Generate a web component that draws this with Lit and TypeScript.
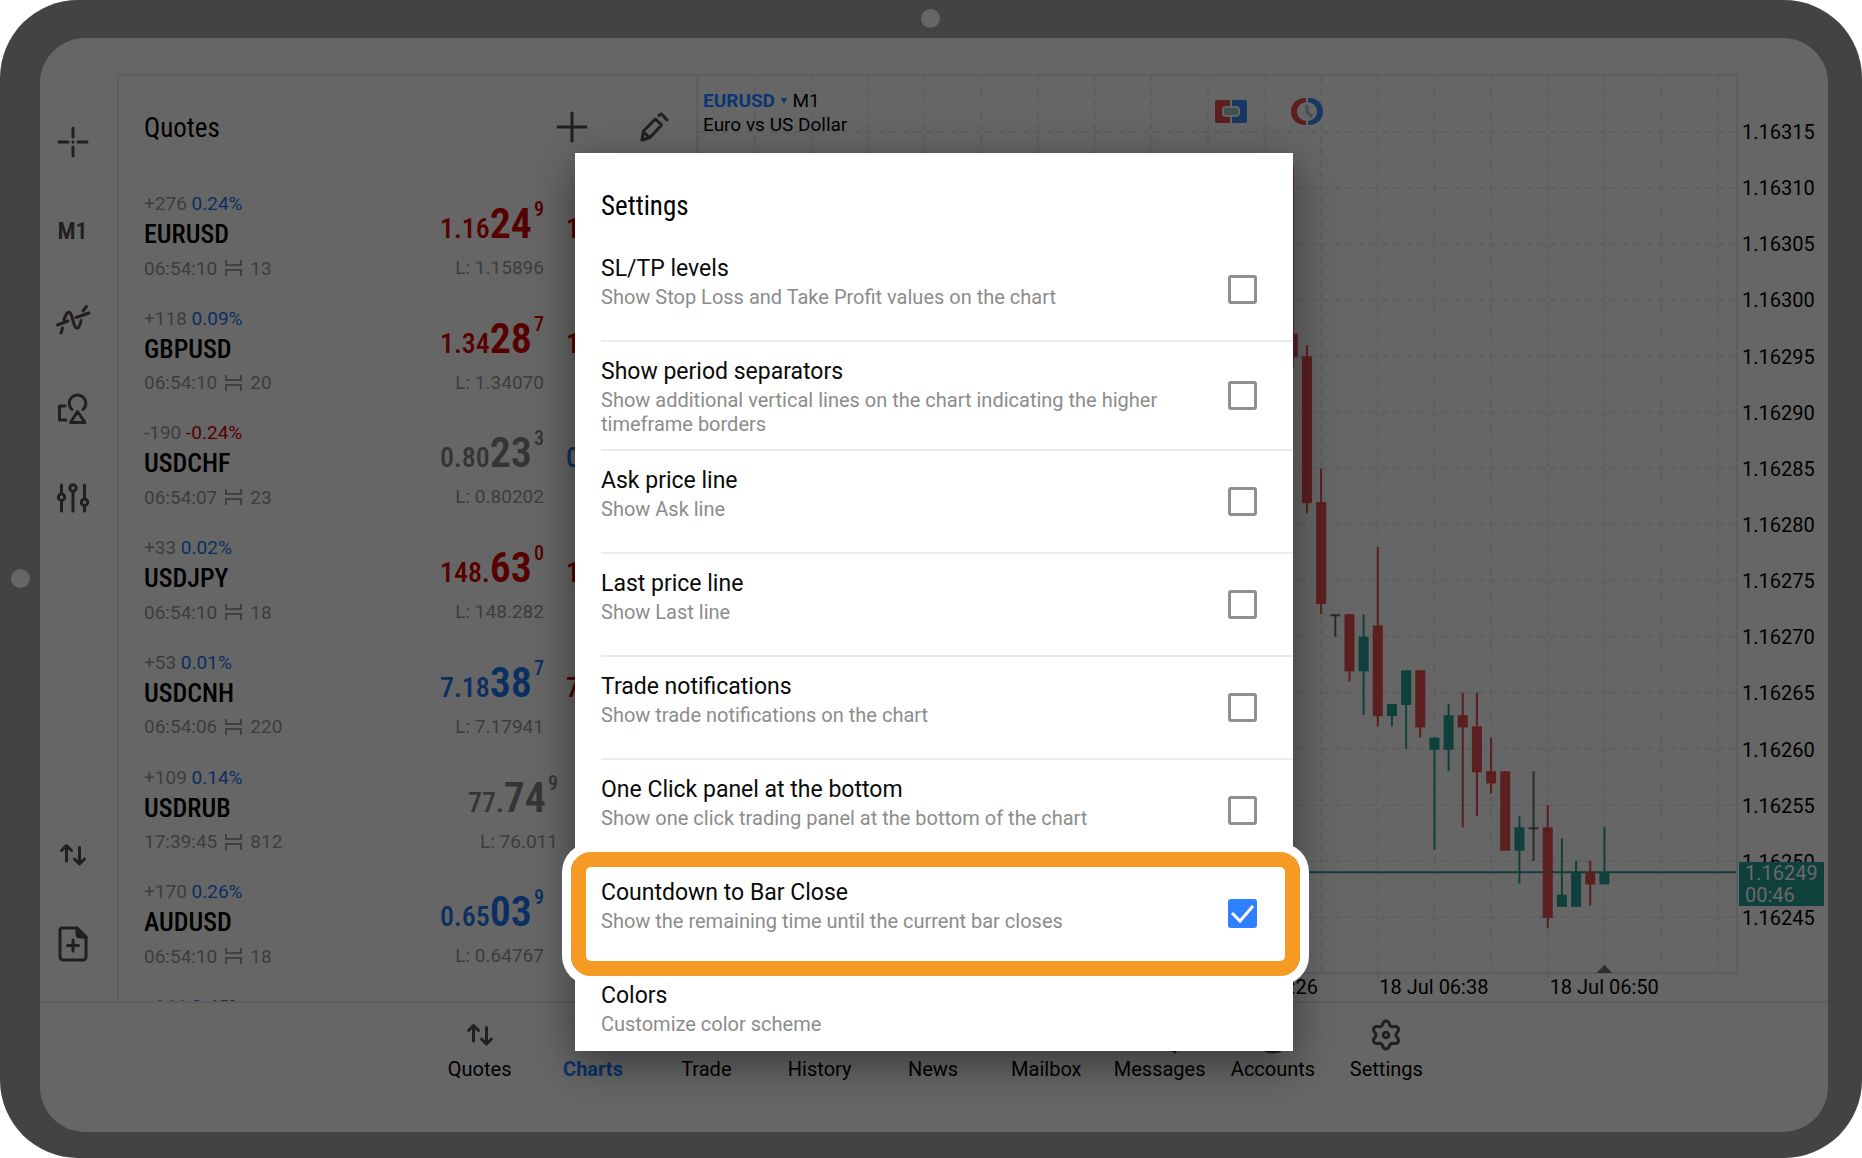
import { LitElement, html, css, svg, nothing } from "lit";
import { customElement, property, state } from "lit/decorators.js";
import { classMap } from "lit/directives/class-map.js";

type Tone = "red" | "blue" | "gray";

interface Price {
  lead: string;
  big: string;
  tip: string;
  tone: Tone;
}

interface Quote {
  change: string;
  percent: string;
  down?: boolean;
  symbol: string;
  time: string;
  spread: string;
  bid: Price;
  low: string;
  ask: Price;
  high: string;
}

const price = (lead: string, big: string, tip: string, tone: Tone): Price => ({ lead, big, tip, tone });

const QUOTES: Quote[] = [
  { change: "+276", percent: "0.24%", symbol: "EURUSD", time: "06:54:10", spread: "13", bid: price("1.16", "24", "9", "red"), low: "1.15896", ask: price("1.16", "26", "2", "red"), high: "1.16311" },
  { change: "+118", percent: "0.09%", symbol: "GBPUSD", time: "06:54:10", spread: "20", bid: price("1.34", "28", "7", "red"), low: "1.34070", ask: price("1.34", "30", "7", "red"), high: "1.34388" },
  { change: "-190", percent: "-0.24%", down: true, symbol: "USDCHF", time: "06:54:07", spread: "23", bid: price("0.80", "23", "3", "gray"), low: "0.80202", ask: price("0.80", "25", "6", "blue"), high: "0.80457" },
  { change: "+33", percent: "0.02%", symbol: "USDJPY", time: "06:54:10", spread: "18", bid: price("148.", "63", "0", "red"), low: "148.282", ask: price("148.", "64", "8", "red"), high: "148.751" },
  { change: "+53", percent: "0.01%", symbol: "USDCNH", time: "06:54:06", spread: "220", bid: price("7.18", "38", "7", "blue"), low: "7.17941", ask: price("7.18", "60", "7", "red"), high: "7.18622" },
  { change: "+109", percent: "0.14%", symbol: "USDRUB", time: "17:39:45", spread: "812", bid: price("77.", "74", "9", "gray"), low: "76.011", ask: price("78.", "56", "1", "gray"), high: "78.640" },
  { change: "+170", percent: "0.26%", symbol: "AUDUSD", time: "06:54:10", spread: "18", bid: price("0.65", "03", "9", "blue"), low: "0.64767", ask: price("0.65", "05", "7", "blue"), high: "0.65084" },
  { change: "+266", percent: "0.45%", symbol: "NZDUSD", time: "06:54:10", spread: "21", bid: price("0.59", "58", "4", "blue"), low: "0.59271", ask: price("0.59", "60", "5", "blue"), high: "0.59630" },
];

/* Candles, oldest first: open, high, low, close in points above 1.16000. */
const CANDLES: [number, number, number, number][] = [
  [297, 312, 294, 295],
  [295, 296, 281, 282],
  [282, 285, 272, 273],
  [272, 272, 270, 272],
  [272, 272, 266, 267],
  [267, 272, 263, 270],
  [271, 278, 262, 263],
  [263, 264, 262, 264],
  [264, 267, 260, 267],
  [267, 267, 261, 262],
  [260, 261, 251, 261],
  [260, 264, 258, 263],
  [263, 265, 253, 262],
  [262, 265, 254, 258],
  [258, 261, 256, 257],
  [258, 258, 251, 251],
  [251, 254, 248, 253],
  [253, 258, 250, 253],
  [253, 255, 244, 245],
  [246, 252, 246, 247],
  [246, 250, 246, 249],
  [249, 250, 246, 248],
  [248, 253, 248, 249],
];

const PRICES = Array.from({ length: 15 }, (_, i) => 315 - i * 5);
const TIMES = ["05:50", "06:02", "06:14", "06:26", "06:38", "06:50"];
const PLOT = { w: 1038, h: 896, step: 14.164, last: 906.4, top: 56, unit: 11.215 };
const yOf = (p: number) => PLOT.top + (315 - p) * PLOT.unit;

interface Setting {
  id: string;
  title: string;
  text: string;
  on?: boolean;
  plain?: boolean;
}

const SETTINGS: Setting[] = [
  { id: "levels", title: "SL/TP levels", text: "Show Stop Loss and Take Profit values on the chart" },
  { id: "periods", title: "Show period separators", text: "Show additional vertical lines on the chart indicating the higher timeframe borders" },
  { id: "ask", title: "Ask price line", text: "Show Ask line" },
  { id: "last", title: "Last price line", text: "Show Last line" },
  { id: "trade", title: "Trade notifications", text: "Show trade notifications on the chart" },
  { id: "oneclick", title: "One Click panel at the bottom", text: "Show one click trading panel at the bottom of the chart" },
  { id: "countdown", title: "Countdown to Bar Close", text: "Show the remaining time until the current bar closes", on: true },
  { id: "colors", title: "Colors", text: "Customize color scheme", plain: true },
];

const gear = () => {
  const pts: string[] = [];
  for (let i = 0; i < 72; i++) {
    const a = (i / 72) * Math.PI * 2;
    const c = Math.cos(6 * a);
    const r = 12 + 2 * Math.sign(c) * Math.pow(Math.abs(c), 0.7);
    pts.push(`${(16 + r * Math.sin(a)).toFixed(2)} ${(16 - r * Math.cos(a)).toFixed(2)}`);
  }
  return `M${pts.join("L")}Z`;
};

const ICONS: Record<string, { w: number; h: number; body: unknown }> = {
  cross: { w: 32, h: 32, body: svg`<path d="M16 2v9M16 21v9M2 16h9M21 16h9"/><path d="M16 16v0"/>` },
  wave: { w: 34, h: 30, body: svg`<path d="M5 28l1.500-5M8 15C9.500 9 13 3.500 15.500 10.500L18 19c2 6.500 5.500 5 7-3.500M27 6l3.500-4.500M1.500 20L12 16M20 12.500L33 8"/>` },
  shapes: { w: 30, h: 31, body: svg`<path d="M14 16.500a8.300 8.300 0 1 1 11 0M7 13H1.500v14H8M19.500 18.500L12.500 29.500h14.500z"/>` },
  sliders: { w: 32, h: 30, body: svg`<path d="M4.500 2v8.500M4.500 18v10M16 9v19M27.500 2v13.500M27.500 23v5"/><circle cx="4.500" cy="14.300" r="3.200"/><circle cx="16" cy="5" r="3.200"/><circle cx="27.500" cy="19.200" r="3.200"/>` },
  swap: { w: 26, h: 24, body: svg`<path d="M6.500 18V2.500M1.500 7.500l5-5 5 5M19.500 4.500V21M14.500 16l5 5 5-5"/>` },
  file: { w: 30, h: 36, body: svg`<path d="M4 2h15l9 9v20a3 3 0 0 1-3 3H5a3 3 0 0 1-3-3V4a2 2 0 0 1 2-2zM15 14v11M9.500 19.500h11"/><path class="solid" d="M19 2v6q0 3 3 3h6z"/>` },
  plus: { w: 32, h: 32, body: svg`<path d="M16 2v28M2 16h28"/>` },
  pencil: { w: 30, h: 30, body: svg`<path d="M2 28l1.500-9L15.500 7l6 6L10 25.500zM19 3.500l1-1q1-1 2 0l5 5.500M3.500 20l6 5.500"/>` },
  chart: { w: 30, h: 30, body: svg`<path d="M7 3v24M15 6v20M23 2v24M4 9h6v11H4zM20 7h6v12h-6z"/>` },
  trade: { w: 30, h: 30, body: svg`<path d="M2 24l9-10 6 6L28 6"/>` },
  history: { w: 30, h: 30, body: svg`<circle cx="15" cy="15" r="12"/><path d="M15 8v8l5 3"/>` },
  news: { w: 30, h: 26, body: svg`<path d="M3 3h24v20H3zM8 9h14M8 16h14"/>` },
  mail: { w: 30, h: 26, body: svg`<path d="M3 3h24v20H3zM3 5l12 9L27 5"/>` },
  chat: { w: 34, h: 36, body: svg`<path d="M4 3h26v24H4zM26 27l6 8-10-8"/>` },
  person: { w: 36, h: 36, body: svg`<circle cx="18" cy="18" r="17"/><circle cx="18" cy="13" r="5"/><path class="solid" d="M7 28q11-9 22 0-11 13-22 0z"/>` },
  gear: { w: 32, h: 32, body: svg`<path d=${gear()}/><circle cx="16" cy="16" r="2.800"/>` },
};

@customElement("line-icon")
export class LineIcon extends LitElement {
  @property() name = "plus";

  static styles = css`
    :host {
      display: flex;
    }
    svg {
      display: block;
      fill: none;
      stroke: #231f20;
      stroke-width: 3;
      stroke-linecap: round;
      stroke-linejoin: round;
      overflow: visible;
    }
    .solid {
      fill: #231f20;
    }
  `;

  render() {
    const i = ICONS[this.name];
    return html`<svg width=${i.w} height=${i.h} viewBox="0 0 ${i.w} ${i.h}" aria-hidden="true">${i.body}</svg>`;
  }
}

@customElement("side-rail")
export class SideRail extends LitElement {
  static styles = css`
    :host {
      display: flex;
      flex-direction: column;
      padding: 23px 12px 13px 0;
    }
    button {
      display: flex;
      align-items: center;
      justify-content: center;
      height: 89px;
      padding: 0;
      border: 0;
      background: none;
      color: #231f20;
      font: 600 24px "Roboto Condensed", "Liberation Sans Narrow", Roboto, sans-serif;
    }
    .lower {
      margin-top: auto;
    }
  `;

  render() {
    return html`
      <button aria-label="Crosshair"><line-icon name="cross"></line-icon></button>
      <button>M1</button>
      <button aria-label="Indicators"><line-icon name="wave"></line-icon></button>
      <button aria-label="Objects"><line-icon name="shapes"></line-icon></button>
      <button aria-label="Chart settings"><line-icon name="sliders"></line-icon></button>
      <button class="lower" aria-label="New order"><line-icon name="swap"></line-icon></button>
      <button aria-label="Add chart"><line-icon name="file"></line-icon></button>
    `;
  }
}

@customElement("quotes-panel")
export class QuotesPanel extends LitElement {
  static styles = css`
    :host {
      display: flex;
      flex-direction: column;
      min-height: 0;
      overflow: hidden;
      border: 2px solid #5e5e5e;
      border-bottom: 0;
    }
    .head {
      display: flex;
      align-items: center;
      flex: none;
      height: 104px;
      padding-left: 25px;
    }
    h2 {
      flex: 1;
      margin: 0;
      font: 400 27px/32px "Roboto Condensed", "Liberation Sans Narrow", Roboto, sans-serif;
      color: #000;
    }
    .head button {
      display: flex;
      justify-content: center;
      width: 83px;
      margin-bottom: 3px;
      padding: 0;
      border: 0;
      background: none;
    }
    .list {
      display: grid;
      grid-template-rows: repeat(7, minmax(0, 1fr));
      grid-auto-rows: 0;
      flex: 1;
      min-height: 0;
      overflow: hidden;
      margin: 0;
      padding: 13px 26px 5px 25px;
      list-style: none;
    }
    .row {
      display: flex;
      gap: 22px;
    }
    .info {
      flex: 1;
    }
    .move {
      line-height: 22px;
    }
    .symbol {
      font: 500 26px/39px "Roboto Condensed", "Liberation Sans Narrow", Roboto, sans-serif;
      color: #000;
    }
    .meta {
      display: flex;
      align-items: center;
      gap: 8px;
      height: 28px;
      white-space: nowrap;
    }
    .meta svg {
      fill: none;
      stroke: #404040;
      stroke-width: 2;
    }
    .side {
      text-align: right;
      white-space: nowrap;
    }
    .price {
      height: 61px;
      font: 500 28px/61px "Roboto Condensed", "Liberation Sans Narrow", Roboto, sans-serif;
    }
    .big {
      font-size: 42px;
      font-weight: 600;
    }
    .tip {
      margin-left: 2px;
      font-size: 20px;
      line-height: 0;
      vertical-align: 22px;
    }
    .extreme {
      line-height: 28px;
    }
    .blue {
      color: #0a2f60;
    }
    .red {
      color: #560000;
    }
    .gray {
      color: #353535;
    }
  `;

  private side(p: Price, label: string) {
    return html`<div class="side">
      <div class=${classMap({ price: true, [p.tone]: true })}>${p.lead}<span class="big">${p.big}</span><span class="tip">${p.tip}</span></div>
      <div class="extreme">${label}</div>
    </div>`;
  }

  render() {
    return html`
      <div class="head">
        <h2>Quotes</h2>
        <button aria-label="Add symbol"><line-icon name="plus"></line-icon></button>
        <button aria-label="Edit list"><line-icon name="pencil"></line-icon></button>
      </div>
      <ul class="list">
        ${QUOTES.map(
          (q) => html`<li class="row">
            <div class="info">
              <div class="move">${q.change} <span class=${q.down ? "red" : "blue"}>${q.percent}</span></div>
              <div class="symbol">${q.symbol}</div>
              <div class="meta">
                <span>${q.time}</span>
                <svg width="17" height="16" viewBox="0 0 17 16" aria-hidden="true"><path d="M1 0v5h15V0M1 16v-6h15v6" /></svg>
                <span>${q.spread}</span>
              </div>
            </div>
            ${this.side(q.bid, `L: ${q.low}`)} ${this.side(q.ask, `H: ${q.high}`)}
          </li>`,
        )}
      </ul>
    `;
  }
}

@customElement("price-chart")
export class PriceChart extends LitElement {
  static styles = css`
    :host {
      display: grid;
      grid-template-columns: minmax(0, 1fr) 90px;
      grid-template-rows: minmax(0, 1fr) 27px;
      min-height: 0;
      color: #000;
      font-size: 20px;
    }
    .plot {
      position: relative;
      min-height: 0;
      border: 2px solid #5d5d5d;
      border-left: 0;
    }
    .canvas {
      position: absolute;
      inset: 0;
      width: 100%;
      height: 100%;
      overflow: visible;
    }
    .grid {
      fill: none;
      stroke: #5f5f5f;
      stroke-width: 2;
      stroke-dasharray: 7 5;
    }
    .tick {
      stroke: #5b5b5b;
      stroke-width: 2;
    }
    .up {
      fill: #10403b;
      stroke: #10403b;
    }
    .down {
      fill: #5c1f1f;
      stroke: #5c1f1f;
    }
    .flat {
      fill: #2b2b2b;
      stroke: #2b2b2b;
    }
    .wick {
      stroke-width: 2;
    }
    .body {
      stroke: none;
    }
    .marker {
      fill: #2e2e2e;
    }
    .now {
      stroke: #10403b;
      stroke-width: 2;
    }
    .head {
      position: relative;
      display: flex;
      padding: 13px 413px 0 5px;
      font-size: 19px;
      line-height: 24px;
    }
    .names {
      flex: 1;
    }
    .pair {
      padding: 0;
      border: 0;
      background: none;
      color: #0b3574;
      font: inherit;
      font-weight: 700;
    }
    .tools {
      display: flex;
      gap: 43px;
      padding-top: 9px;
    }
    .tools button {
      display: flex;
      height: 30px;
      padding: 0;
      border: 0;
      background: none;
    }
    .left {
      fill: #5c1f1e;
    }
    .right {
      fill: #163863;
    }
    .pill {
      fill: #434e52;
      stroke: #646464;
      stroke-width: 2;
    }
    .hands {
      fill: none;
      stroke: #434e52;
      stroke-width: 3;
    }
    .axis {
      position: relative;
      display: grid;
      grid-template-rows: repeat(15, 1fr);
      align-items: center;
      padding: 30px 0 28px 4px;
    }
    .tag {
      position: absolute;
      top: 87.5%;
      left: 1px;
      width: 79px;
      padding-left: 6px;
      background: #10403b;
      color: #6a6a6a;
      line-height: 22px;
    }
    .times {
      display: grid;
      grid-template-columns: repeat(6, 170fr) 18fr;
      line-height: 26px;
      white-space: nowrap;
    }
  `;

  private candle(c: [number, number, number, number], i: number) {
    const [open, high, low, close] = c;
    const x = PLOT.last - (CANDLES.length - 1 - i) * PLOT.step;
    const top = yOf(Math.max(open, close));
    const height = Math.max(2, Math.abs(open - close) * PLOT.unit + 1);
    const tone = open === close ? "flat" : close > open ? "up" : "down";
    return svg`<g class=${tone}>
      <line class="wick" x1=${x} x2=${x} y1=${yOf(high)} y2=${yOf(low)}></line>
      <rect class="body" x=${x - 5} y=${top} width="10" height=${height}></rect>
    </g>`;
  }

  render() {
    const cols = Array.from({ length: 19 }, (_, i) => i * PLOT.step * 4);
    return html`
      <div class="plot">
        <svg class="canvas" viewBox="0 0 ${PLOT.w} ${PLOT.h}" preserveAspectRatio="none" role="img" aria-label="EURUSD candles">
          ${cols.map((x) => svg`<path class="grid" d="M${x} 0V${PLOT.h}"></path>`)}
          ${PRICES.map((p) => svg`<path class="grid" d="M0 ${yOf(p)}H1042"></path>`)}
          ${[680, 850].map((x) => svg`<path class="tick" d="M${x} ${PLOT.h}v6"></path>`)}
          <line class="now" x1="0" x2="1038" y1=${yOf(249)} y2=${yOf(249)}></line>
          ${CANDLES.map((c, i) => this.candle(c, i))}
          <path class="marker" d="M${PLOT.last - 8} ${PLOT.h + 1}l8-8 8 8z"></path>
        </svg>
        <div class="head">
          <div class="names">
            <div><button class="pair">EURUSD <svg width="8" height="12" viewBox="0 0 8 12" fill="currentColor" aria-hidden="true"><path d="M1 3h6l-3 6z" /></svg></button> M1</div>
            <div>Euro vs US Dollar</div>
          </div>
          <div class="tools">
            <button aria-label="One click trading">
              <svg width="34" height="27" viewBox="0 0 34 27">
                <path class="left" d="M3 2h13v23H3a2 2 0 0 1-2-2V4a2 2 0 0 1 2-2z" />
                <path class="right" d="M18 2h13a2 2 0 0 1 2 2v19a2 2 0 0 1-2 2H18z" />
                <rect class="pill" x="9" y="9" width="16" height="9" rx="3" />
              </svg>
            </button>
            <button aria-label="Trading sessions">
              <svg width="32" height="27" viewBox="0 0 32 27">
                <path class="left" d="M15 0C5 0 0 6 0 13.500S5 27 15 27v-4C9 22 6 18 6 13.500S9 5 15 4z" />
                <path class="right" d="M17 0c10 0 15 6 15 13.500S27 27 17 27v-4c6-1 9-5 9-9.500S23 5 17 4z" />
                <path class="hands" d="M16 7v7l5 5" />
              </svg>
            </button>
          </div>
        </div>
      </div>
      <div class="axis">
        ${PRICES.map((p) => html`<span>1.16${p}</span>`)}
        <div class="tag"><div>1.16249</div><div>00:46</div></div>
      </div>
      <div class="times">${TIMES.map((t) => html`<span>18 Jul ${t}</span>`)}</div>
    `;
  }
}

@customElement("tab-bar")
export class TabBar extends LitElement {
  static styles = css`
    :host {
      display: flex;
      justify-content: center;
      height: 129px;
      padding-right: 2px;
      border-top: 2px solid #5e5e5e;
    }
    nav {
      display: grid;
      grid-template-columns: repeat(9, minmax(0, 1fr));
      width: 100%;
      max-width: 1020px;
    }
    a {
      display: flex;
      flex-direction: column;
      align-items: center;
      padding-top: 12px;
      color: #000;
      font-size: 20px;
      line-height: 24px;
      text-decoration: none;
    }
    line-icon {
      align-items: center;
      height: 40px;
      margin-bottom: 2px;
    }
    .current {
      color: #0b3268;
      font-weight: 700;
    }
  `;

  render() {
    const tabs = [
      ["Quotes", "swap"],
      ["Charts", "chart"],
      ["Trade", "trade"],
      ["History", "history"],
      ["News", "news"],
      ["Mailbox", "mail"],
      ["Messages", "chat"],
      ["Accounts", "person"],
      ["Settings", "gear"],
    ];
    return html`<nav>
      ${tabs.map(
        ([label, icon]) => html`<a href="#${label.toLowerCase()}" class=${classMap({ current: label === "Charts" })}>
          <line-icon name=${icon}></line-icon>${label}
        </a>`,
      )}
    </nav>`;
  }
}

@customElement("settings-dialog")
export class SettingsDialog extends LitElement {
  @state() private checked = new Set(SETTINGS.filter((s) => s.on).map((s) => s.id));

  static styles = css`
    :host {
      display: block;
      background: #fff;
      box-shadow: 0 12px 40px rgba(0, 0, 0, 0.45);
      color: #0a0a0a;
    }
    h1 {
      margin: 0;
      padding: 37px 26px 17px;
      font: 400 27px/32px "Roboto Condensed", "Liberation Sans Narrow", Roboto, sans-serif;
      color: #000;
    }
    .item {
      position: relative;
      display: flex;
      align-items: center;
      box-sizing: border-box;
      min-height: 103px;
      margin-left: 26px;
      padding-right: 36px;
      border-bottom: 2px solid #ebebeb;
    }
    .item.plain {
      min-height: 85px;
      border-bottom: 0;
    }
    label {
      flex: 1;
      align-self: stretch;
      padding: 15px 56px 13px 0;
    }
    .title {
      display: block;
      margin-bottom: 1px;
      font-size: 23px;
      line-height: 30px;
    }
    .text {
      display: block;
      font-size: 20px;
      line-height: 24px;
      color: #8c8c8c;
    }
    .box {
      display: flex;
      position: relative;
    }
    input {
      appearance: none;
      width: 29px;
      height: 29px;
      margin: 0;
      border: 3px solid #8f8f8f;
      border-radius: 3px;
    }
    input:checked {
      border-color: #2f80ff;
      background: #2f80ff;
    }
    .tick {
      position: absolute;
      inset: 0;
      fill: none;
      stroke: #fff;
      stroke-width: 3;
      pointer-events: none;
    }
    .ring {
      position: absolute;
      inset: -11px -7px -12px -30px;
      border: 15px solid #f59b23;
      border-radius: 20px;
      box-shadow: 0 0 0 9px #fff;
      pointer-events: none;
    }
  `;

  private toggle(id: string) {
    const next = new Set(this.checked);
    if (!next.delete(id)) next.add(id);
    this.checked = next;
  }

  render() {
    return html`
      <h1>Settings</h1>
      ${SETTINGS.map((s) => {
        const on = this.checked.has(s.id);
        return html`<div class=${classMap({ item: true, plain: !!s.plain })}>
          ${s.id === "countdown" ? html`<span class="ring"></span>` : nothing}
          <label for=${s.id}><span class="title">${s.title}</span><span class="text">${s.text}</span></label>
          ${s.plain
            ? nothing
            : html`<span class="box">
                <input type="checkbox" id=${s.id} .checked=${on} @change=${() => this.toggle(s.id)} />
                ${on ? html`<svg class="tick" width="29" height="29" viewBox="0 0 29 29" aria-hidden="true"><path d="M4 14l8 8L25 7" /></svg>` : nothing}
              </span>`}
        </div>`;
      })}
    `;
  }
}

@customElement("app-root")
export class AppRoot extends LitElement {
  static styles = css`
    :host {
      display: block;
      background: #fff;
      font-family: Roboto, sans-serif;
    }
    .tablet {
      position: relative;
      box-sizing: border-box;
      height: 100vh;
      padding: 38px 34px 26px 40px;
      border-radius: 78px;
      background: #434343;
    }
    .lens {
      position: absolute;
      width: 19px;
      height: 19px;
      border-radius: 50%;
      background: #666;
    }
    .lens.top {
      top: 9px;
      left: 50%;
      margin-left: -10px;
    }
    .lens.left {
      top: 50%;
      left: 11px;
      margin-top: -10px;
    }
    .screen {
      position: relative;
      display: flex;
      flex-direction: column;
      height: 100%;
      border-radius: 45px;
      background: #666;
      color: #3d3d3d;
      font-size: 19px;
    }
    .work {
      display: grid;
      grid-template-columns: 77px 581px minmax(0, 1fr);
      grid-template-rows: minmax(0, 1fr);
      flex: 1;
      min-height: 0;
      padding-top: 36px;
    }
    settings-dialog {
      position: absolute;
      top: 115px;
      left: 50%;
      width: 718px;
      margin-left: -359px;
    }
  `;

  render() {
    return html`<div class="tablet">
      <span class="lens top"></span>
      <span class="lens left"></span>
      <div class="screen">
        <div class="work">
          <side-rail></side-rail>
          <quotes-panel></quotes-panel>
          <price-chart></price-chart>
        </div>
        <tab-bar></tab-bar>
        <settings-dialog role="dialog" aria-label="Settings"></settings-dialog>
      </div>
    </div>`;
  }
}
